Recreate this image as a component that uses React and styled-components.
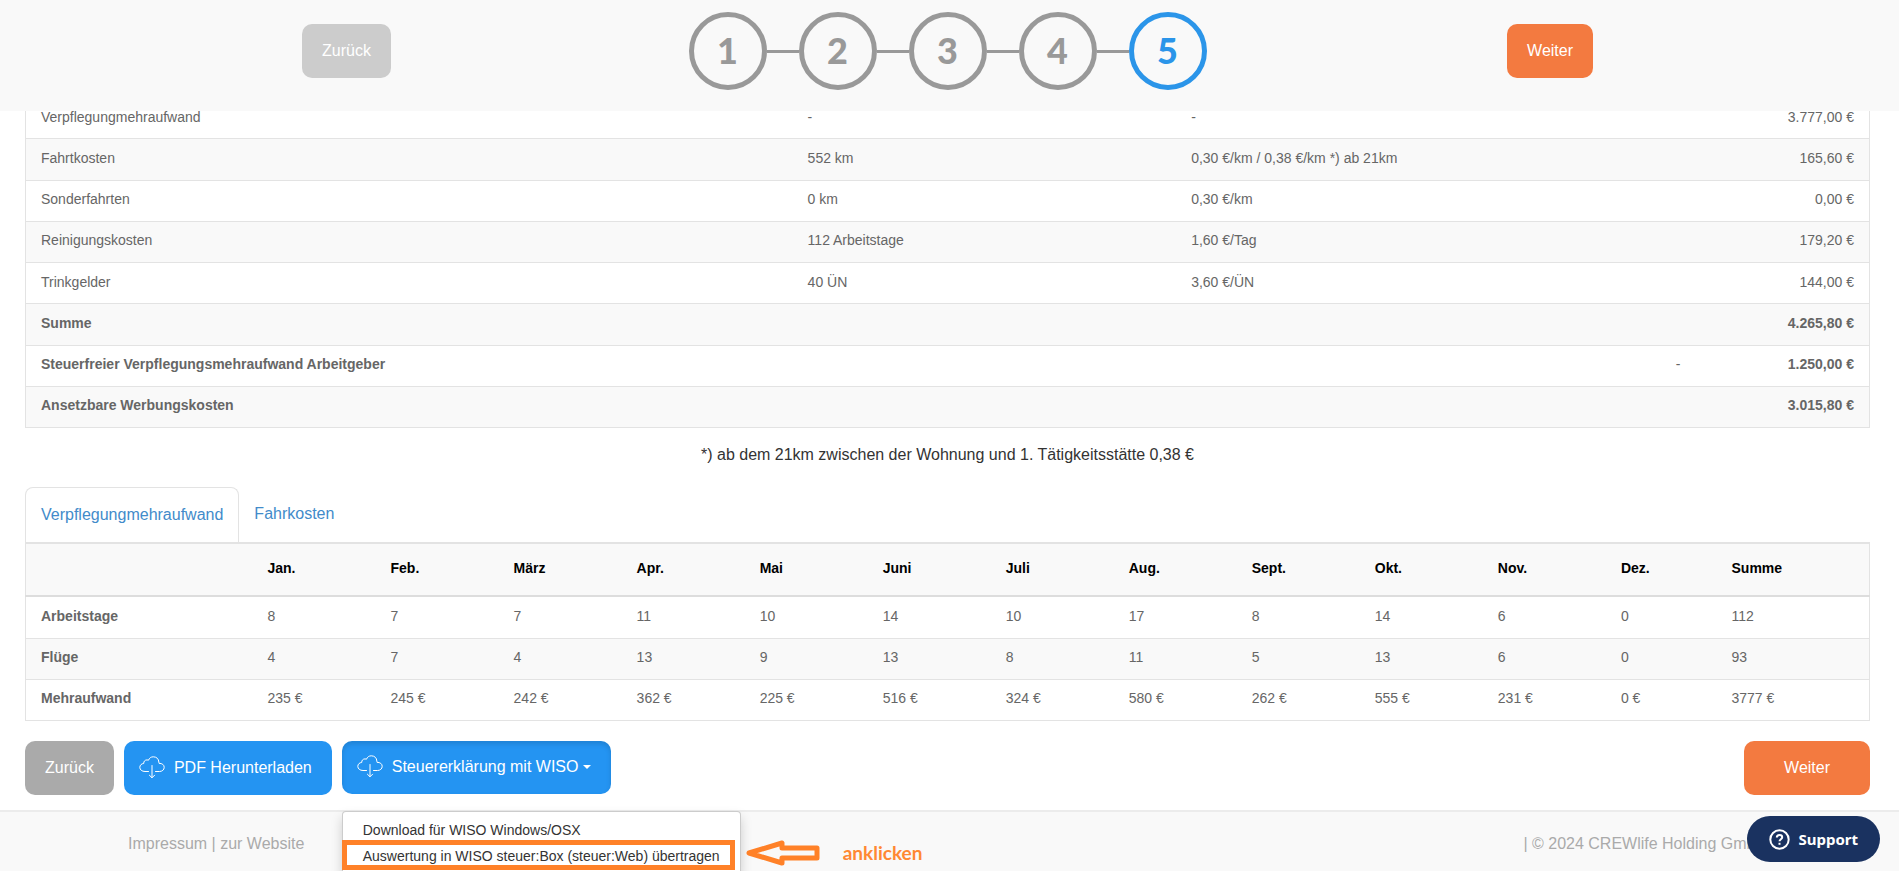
import { useState } from "react";
import styled, { createGlobalStyle, css } from "styled-components";

const GlobalStyle = createGlobalStyle`
  * {
    box-sizing: border-box;
  }

  body {
    margin: 0;
    background-color: #fff;
    color: #333;
    font-family: "Liberation Sans", Arial, Helvetica, sans-serif;
    font-size: 16px;
    line-height: 24px;
    overflow: hidden;
  }
`;

const Header = styled.header`
  position: sticky;
  top: 0;
  z-index: 10;
  display: grid;
  grid-template-columns: 1fr auto 1fr;
  align-items: center;
  padding: 12px 4px 21px 0;
  background-color: #f9f9f9;
`;

const HeaderLeft = styled.div`
  display: flex;
  padding-left: 302px;
`;

const HeaderRight = styled.div`
  display: flex;
  justify-content: flex-end;
  padding-right: 302px;
`;

const Steps = styled.ol`
  display: flex;
  align-items: center;
  margin: 0;
  padding: 0;
  list-style: none;
`;

const Step = styled.li`
  display: flex;
  align-items: center;

  & + &::before {
    content: "";
    width: 32px;
    height: 3px;
    background-color: #999;
  }
`;

const StepCircle = styled.span`
  display: flex;
  align-items: center;
  justify-content: center;
  width: 78px;
  height: 78px;
  padding-bottom: 2px;
  border: 5px solid currentColor;
  border-radius: 50%;
  color: ${(props) => (props.$active ? "#2b95e9" : "#999")};
  font-family: Lato, sans-serif;
  font-size: 36px;
  font-weight: 900;
`;

const Button = styled.button`
  display: flex;
  align-items: center;
  height: 54px;
  padding: 0 ${(props) => (props.$wide ? 40 : 20)}px;
  border: none;
  border-radius: 10px;
  background-color: ${(props) => props.$color};
  color: #fff;
  font: inherit;
  white-space: nowrap;
  cursor: pointer;
`;

const DropdownToggle = styled(Button)`
  height: 53px;
  padding-bottom: 1px;
  ${(props) =>
    props.$open &&
    css`
      box-shadow: inset 0 3px 5px rgba(0, 0, 0, 0.125);
    `}
`;

const Content = styled.main`
  margin-top: -14px;
  padding: 0 29px 15px 25px;
`;

const Table = styled.table`
  width: 100%;
  height: ${(props) => props.$height}px;
  table-layout: fixed;
  border-collapse: collapse;
  border: 1px solid #e3e3e3;
  color: #666;
  font-size: 14px;
  line-height: 20px;
`;

const Col = styled.col`
  width: ${(props) => props.$width || "auto"};
`;

const Tr = styled.tr`
  border-bottom: 1px solid #e3e3e3;
  background-color: ${(props) => (props.$shaded ? "#f9f9f9" : "#fff")};
`;

const Td = styled.td`
  padding: 0 15px 3px;
  text-align: ${(props) => (props.$right ? "right" : "left")};
  font-weight: ${(props) => (props.$bold ? "bold" : "normal")};
`;

const RowHead = styled.th`
  padding: 0 15px 3px;
  text-align: left;
  font-weight: ${(props) => (props.$bold ? "bold" : "normal")};
`;

const HeadRow = styled.tr`
  height: 53px;
  border-top: 2px solid #e3e3e3;
  border-bottom: 2px solid #ddd;
  background-color: #f9f9f9;
`;

const Th = styled.th`
  padding: 0 15px 4px;
  color: #000;
  text-align: left;
`;

const Note = styled.p`
  margin: 15px 0 20px;
  text-align: center;
`;

const Tabs = styled.div`
  display: flex;
`;

const Tab = styled.button`
  height: 55px;
  padding: 0 15px;
  border: 1px solid #e3e3e3;
  border-bottom: none;
  border-radius: 8px 8px 0 0;
  background-color: #fff;
  color: #428bca;
  font: inherit;
  cursor: pointer;
  ${(props) =>
    !props.$active &&
    css`
      padding-bottom: 2px;
      border: none;
    `}
`;

const Actions = styled.div`
  display: flex;
  gap: 10px;
  margin-top: 20px;
`;

const Push = styled.div`
  margin-left: auto;
`;

const Dropdown = styled.div`
  position: relative;
`;

const CloudSvg = styled.svg`
  width: 26px;
  height: 26px;
  margin: 2px 9px 0 -5px;
`;

const Caret = styled.span`
  margin-left: 5px;
  border-top: 4px solid currentColor;
  border-left: 4px solid transparent;
  border-right: 4px solid transparent;
`;

const Menu = styled.ul`
  position: absolute;
  top: 70px;
  left: 0;
  z-index: 5;
  margin: 0;
  padding: 5px 0;
  border: 1px solid rgba(0, 0, 0, 0.2);
  border-radius: 4px;
  background-color: #fff;
  box-shadow: 0 6px 12px rgba(0, 0, 0, 0.175);
  list-style: none;
`;

const MenuLink = styled.a`
  display: block;
  padding: 1px 20px;
  color: #333;
  font-size: 14px;
  text-decoration: none;
  white-space: nowrap;
`;

const Marker = styled.li`
  position: absolute;
  top: 28px;
  left: -1px;
  right: 5px;
  height: 30px;
  border: 5px solid #ff8128;
  pointer-events: none;
`;

const Hint = styled.li`
  position: absolute;
  top: 28px;
  left: 100%;
  display: flex;
  align-items: center;
  gap: 23px;
  margin-left: 6px;
  color: #ff8833;
  font-family: Lato, sans-serif;
  font-size: 19px;
  font-weight: 700;
`;

const ArrowSvg = styled.svg`
  flex: none;
  width: 74px;
  height: 26px;
`;

const Footer = styled.footer`
  display: flex;
  justify-content: space-between;
  padding: 20px 132px 40px 128px;
  border-top: 2px solid #ececec;
  background-color: #f9f9f9;
  color: #aaa;
`;

const FooterLink = styled.a`
  color: inherit;
  text-decoration: none;
`;

const SupportButton = styled.button`
  position: fixed;
  right: 19px;
  bottom: 9px;
  z-index: 20;
  display: flex;
  align-items: center;
  gap: 8px;
  height: 46px;
  padding: 0 22px;
  border: none;
  border-radius: 23px;
  background-color: #1a3260;
  color: #fff;
  font-family: "Noto Sans", sans-serif;
  font-size: 15px;
  font-weight: 700;
  cursor: pointer;
`;

const steps = [1, 2, 3, 4, 5];

const costs = [
  ["Verpflegungmehraufwand", "-", "-", "3.777,00 €"],
  ["Fahrtkosten", "552 km", "0,30 €/km / 0,38 €/km *) ab 21km", "165,60 €"],
  ["Sonderfahrten", "0 km", "0,30 €/km", "0,00 €"],
  ["Reinigungskosten", "112 Arbeitstage", "1,60 €/Tag", "179,20 €"],
  ["Trinkgelder", "40 ÜN", "3,60 €/ÜN", "144,00 €"],
];

const totals = [
  ["Summe", "", "4.265,80 €"],
  ["Steuerfreier Verpflegungsmehraufwand Arbeitgeber", "-", "1.250,00 €"],
  ["Ansetzbare Werbungskosten", "", "3.015,80 €"],
];

const months = [
  "Jan.", "Feb.", "März", "Apr.", "Mai", "Juni", "Juli",
  "Aug.", "Sept.", "Okt.", "Nov.", "Dez.", "Summe",
];

const monthRows = [
  ["Arbeitstage", [8, 7, 7, 11, 10, 14, 10, 17, 8, 14, 6, 0, 112]],
  ["Flüge", [4, 7, 4, 13, 9, 13, 8, 11, 5, 13, 6, 0, 93]],
  [
    "Mehraufwand",
    [235, 245, 242, 362, 225, 516, 324, 580, 262, 555, 231, 0, 3777].map((n) => `${n} €`),
  ],
];

const tabs = ["Verpflegungmehraufwand", "Fahrkosten"];

function CloudIcon() {
  return (
    <CloudSvg viewBox="0 0 26 26" fill="none" stroke="#fff" strokeLinecap="round" strokeLinejoin="round" aria-hidden="true">
      <path d="M9.500 15.500H6C3 15.500 .8 13.700 .8 11.400C.8 9.200 2.500 7.600 4.700 7.500C4.600 5.300 6 3.900 8 3.900C8.600 3.900 9.100 4 9.500 4.200C10.200 2.100 12 .8 14.300 .8C17.600 .8 19.800 3 19.800 6C20 6.900 20 7 20 7.300C23.200 7.300 25.200 8.900 25.200 11.300C25.200 13.800 23.200 15.500 20.400 15.500H16.500" />
      <path d="M13 9.500V21.500M10.400 19.200L13 21.800L15.600 19.200" />
    </CloudSvg>
  );
}

function Arrow() {
  return (
    <ArrowSvg viewBox="0 0 74 26" fill="none" stroke="#ff8128" strokeWidth="5" strokeLinejoin="round" aria-hidden="true">
      <path d="M3 13L36 3V8H71V18H36V23Z" />
    </ArrowSvg>
  );
}

function HelpIcon() {
  return (
    <svg width="21" height="21" viewBox="0 0 21 21" fill="none" stroke="#fff" strokeWidth="2" aria-hidden="true">
      <circle cx="10.500" cy="10.500" r="9.200" />
      <path d="M7.800 8.400C7.800 6.800 9 5.900 10.500 5.900C12 5.900 13.200 6.800 13.200 8.200C13.200 10.200 10.500 10.200 10.500 12.300" />
      <path d="M10.500 13.800V15.800" />
    </svg>
  );
}

function App() {
  const [activeTab, setActiveTab] = useState(0);
  const [menuOpen, setMenuOpen] = useState(true);

  return (
    <>
      <GlobalStyle />
      <Header>
        <HeaderLeft>
          <Button $color="#ccc" type="button">Zurück</Button>
        </HeaderLeft>
        <Steps>
          {steps.map((step) => (
            <Step key={step}>
              <StepCircle $active={step === 5}>{step}</StepCircle>
            </Step>
          ))}
        </Steps>
        <HeaderRight>
          <Button $color="#f37a40" type="button">Weiter</Button>
        </HeaderRight>
      </Header>

      <Content>
        <Table $height={331}>
          <colgroup>
            <Col $width="41.6%" />
            <Col $width="20.8%" />
            <Col $width="20.8%" />
            <Col />
            <Col $width="174px" />
          </colgroup>
          <tbody>
            {costs.map(([name, amount, rate, sum], i) => (
              <Tr key={name} $shaded={i % 2 === 1}>
                <RowHead scope="row">{name}</RowHead>
                <Td>{amount}</Td>
                <Td>{rate}</Td>
                <Td $right colSpan={2}>{sum}</Td>
              </Tr>
            ))}
            {totals.map(([name, sign, sum], i) => (
              <Tr key={name} $shaded={i % 2 === 0}>
                <RowHead $bold scope="row">{name}</RowHead>
                <Td $right colSpan={3}>{sign}</Td>
                <Td $right $bold>{sum}</Td>
              </Tr>
            ))}
          </tbody>
        </Table>

        <Note>*) ab dem 21km zwischen der Wohnung und 1. Tätigkeitsstätte 0,38 €</Note>

        <Tabs role="tablist">
          {tabs.map((tab, i) => (
            <Tab
              key={tab}
              type="button"
              role="tab"
              aria-selected={i === activeTab}
              $active={i === activeTab}
              onClick={() => setActiveTab(i)}
            >
              {tab}
            </Tab>
          ))}
        </Tabs>
        <Table $height={179}>
          <colgroup>
            <Col $width="227px" />
            {months.slice(0, 11).map((month) => (
              <Col key={month} />
            ))}
            <Col $width="6%" />
            <Col $width="153px" />
          </colgroup>
          <thead>
            <HeadRow>
              <Th />
              {months.map((month) => (
                <Th key={month} scope="col">{month}</Th>
              ))}
            </HeadRow>
          </thead>
          <tbody>
            {monthRows.map(([name, values], i) => (
              <Tr key={name} $shaded={i % 2 === 1}>
                <RowHead $bold scope="row">{name}</RowHead>
                {values.map((value, j) => (
                  <Td key={months[j]}>{value}</Td>
                ))}
              </Tr>
            ))}
          </tbody>
        </Table>

        <Actions>
          <Button $color="#aaa" type="button">Zurück</Button>
          <Button $color="#2494f2" type="button">
            <CloudIcon />
            PDF Herunterladen
          </Button>
          <Dropdown>
            <DropdownToggle
              $color="#2494f2"
              $open={menuOpen}
              type="button"
              aria-expanded={menuOpen}
              onClick={() => setMenuOpen(!menuOpen)}
            >
              <CloudIcon />
              Steuererklärung mit WISO
              <Caret />
            </DropdownToggle>
            {menuOpen && (
              <Menu>
                <li><MenuLink href="#download">Download für WISO Windows/OSX</MenuLink></li>
                <li><MenuLink href="#steuerbox">Auswertung in WISO steuer:Box (steuer:Web) übertragen</MenuLink></li>
                <Marker aria-hidden="true" />
                <Hint>
                  <Arrow />
                  anklicken
                </Hint>
              </Menu>
            )}
          </Dropdown>
          <Push>
            <Button $color="#f37a40" $wide type="button">Weiter</Button>
          </Push>
        </Actions>
      </Content>

      <Footer>
        <div>
          <FooterLink href="#impressum">Impressum</FooterLink> | <FooterLink href="#website">zur Website</FooterLink>
        </div>
        <div>| © 2024 CREWlife Holding GmbH</div>
      </Footer>

      <SupportButton type="button">
        <HelpIcon />
        Support
      </SupportButton>
    </>
  );
}

export default App;
